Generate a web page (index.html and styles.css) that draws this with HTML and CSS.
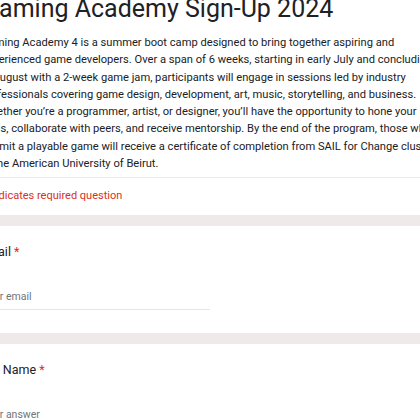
FILE: index.html
```html
<!DOCTYPE html>
<html lang="en">
<head>
<meta charset="utf-8">
<title>Gaming Academy Sign-Up 2024</title>
<link rel="stylesheet" href="styles.css">
</head>
<body>
<main class="form">
  <section class="card header">
    <h1 class="title">Gaming Academy Sign-Up 2024</h1>
    <p class="desc">Gaming Academy 4 is a summer boot camp designed to bring together aspiring and<br>experienced game developers. Over a span of 6 weeks, starting in early July and concluding<br>in August with a 2-week game jam, participants will engage in sessions led by industry<br>professionals covering game design, development, art, music, storytelling, and business.<br>Whether you’re a programmer, artist, or designer, you’ll have the opportunity to hone your<br>skills, collaborate with peers, and receive mentorship. By the end of the program, those who<br>submit a playable game will receive a certificate of completion from SAIL for Change cluster<br>at the American University of Beirut.</p>
    <div class="required-note">* Indicates required question</div>
  </section>
  <section class="card question">
    <div class="q-label">Email <span class="star">*</span></div>
    <div class="input">Your email</div>
  </section>
  <section class="card question">
    <div class="q-label">Full Name <span class="star">*</span></div>
    <div class="input">Your answer</div>
  </section>
</main>
</body>
</html>
```
FILE: styles.css
```css
html, body {
  margin: 0;
  padding: 0;
  background: #ffffff;
  overflow: hidden;
}
.form {
  display: flex;
  flex-direction: column;
  gap: 11px;
  margin-left: -42px;
  width: 540px;
  background: #efe9e9;
  font-family: Roboto, "Liberation Sans", sans-serif;
  color: #202124;
}
.card {
  background: #ffffff;
  padding: 0 24px;
}
.title {
  margin: -5px 0 0;
  font-size: 25px;
  line-height: 28px;
  font-weight: 400;
  color: #202124;
}
.desc {
  margin: 11px 0 0 -1px;
  padding-bottom: 5px;
  font-size: 11.15px;
  line-height: 17.3px;
  white-space: nowrap;
  color: #202124;
  border-bottom: 1px solid #ece9e9;
}
.required-note {
  padding: 9px 0 11px;
  font-size: 11px;
  line-height: 17px;
  color: #d93025;
}
.question {
  padding-top: 16px;
  padding-bottom: 23px;
}
.q-label {
  margin-left: -2px;
  font-size: 12.5px;
  line-height: 20px;
}
.star {
  color: #d93025;
}
.input {
  margin-top: 26px;
  width: 228px;
  padding-bottom: 4px;
  font-size: 10.5px;
  line-height: 17px;
  color: #70757a;
  border-bottom: 1px solid #e6e3e3;
}
```
